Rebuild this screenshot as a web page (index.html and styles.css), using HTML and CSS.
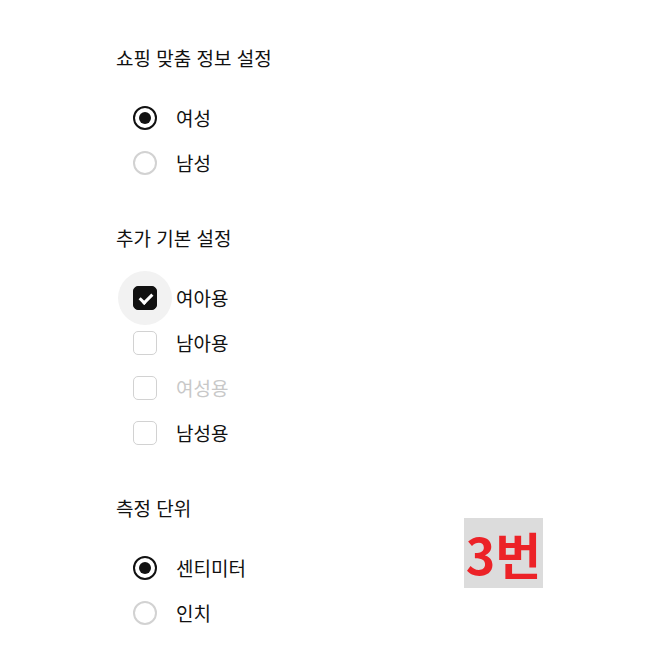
FILE: index.html
```html
<!DOCTYPE html>
<html lang="ko">
<head>
  <meta charset="UTF-8">
  <meta name="viewport" content="width=device-width, initial-scale=1.0">
  <title>설정</title>
  <link rel="stylesheet" href="styles.css">
</head>
<body>
  <div class="container">
    <section class="group">
      <h2>쇼핑 맞춤 정보 설정</h2>
      <div class="option">
        <span class="radio checked"></span>
        <span class="label">여성</span>
      </div>
      <div class="option">
        <span class="radio"></span>
        <span class="label">남성</span>
      </div>
    </section>

    <section class="group">
      <h2>추가 기본 설정</h2>
      <div class="option">
        <span class="check checked focused"></span>
        <span class="label">여아용</span>
      </div>
      <div class="option">
        <span class="check"></span>
        <span class="label">남아용</span>
      </div>
      <div class="option disabled">
        <span class="check"></span>
        <span class="label">여성용</span>
      </div>
      <div class="option">
        <span class="check"></span>
        <span class="label">남성용</span>
      </div>
    </section>

    <section class="group">
      <h2>측정 단위</h2>
      <div class="option">
        <span class="radio checked"></span>
        <span class="label">센티미터</span>
      </div>
      <div class="option">
        <span class="radio"></span>
        <span class="label">인치</span>
      </div>
    </section>
  </div>

  <div class="tag">3번</div>
</body>
</html>
```

FILE: styles.css
```css
body {
  margin: 0;
  background: #fff;
  font-family: "Noto Sans CJK KR", "Noto Sans", sans-serif;
  color: #111;
}
.container {
  padding: 45px 0 0 116px;
}
.group {
  margin-bottom: 40px;
}
h2 {
  margin: 0 0 24px;
  font-size: 19px;
  font-weight: 400;
  line-height: 26px;
}
.option {
  display: flex;
  align-items: center;
  gap: 19px;
  height: 45px;
  padding-left: 17px;
  font-size: 19px;
}
.option.disabled .label {
  color: #c8c8c8;
}
.radio, .check {
  position: relative;
  width: 24px;
  height: 24px;
  box-sizing: border-box;
  flex-shrink: 0;
}
.radio {
  border: 2px solid #d2d2d2;
  border-radius: 50%;
}
.radio.checked {
  border-color: #111;
}
.radio.checked::after {
  content: "";
  position: absolute;
  left: 4px;
  top: 4px;
  width: 12px;
  height: 12px;
  border-radius: 50%;
  background: #111;
}
.check {
  border: 1px solid #d2d2d2;
  border-radius: 5px;
}
.check.checked {
  border-color: #111;
  background: #111;
}
.check.checked::after {
  content: "";
  position: absolute;
  left: 7.5px;
  top: 4px;
  width: 5px;
  height: 10px;
  border-right: 3px solid #fff;
  border-bottom: 3px solid #fff;
  transform: rotate(45deg);
}
.check.focused::before {
  content: "";
  position: absolute;
  left: -16px;
  top: -16px;
  width: 54px;
  height: 54px;
  border-radius: 50%;
  background: #f2f2f2;
  z-index: -1;
}
.tag {
  position: absolute;
  left: 464px;
  top: 518px;
  width: 79px;
  height: 70px;
  background: #dcdcdc;
  color: #ec2227;
  font-size: 50px;
  font-weight: 700;
  line-height: 70px;
  text-align: center;
}
```
